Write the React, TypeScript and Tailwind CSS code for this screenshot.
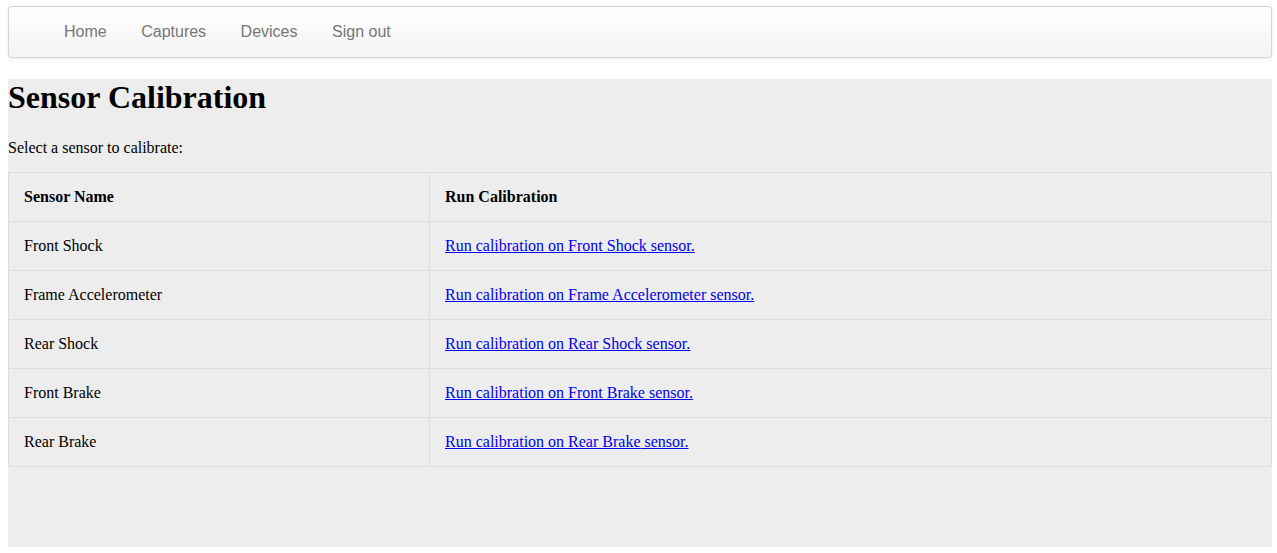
import React from "react";

const sensors = ["Front Shock", "Frame Accelerometer", "Rear Shock", "Front Brake", "Rear Brake"];

export default function App() {
  return (
    <div className="bg-white min-h-[553px] pt-[6px] pl-[8px] pr-[5px]" style={{ fontFamily: '"Liberation Serif", "Times New Roman", serif' }}>
      <nav
        className="h-[52px] border border-[#d4d4d4] rounded-[3px] bg-gradient-to-b from-white to-[#f3f3f3] shadow-[0_1px_5px_rgba(0,0,0,0.075)] flex items-center pl-[55px] gap-[34.5px] text-[16px] text-[#777]"
        style={{ fontFamily: '"Liberation Sans", Arial, sans-serif' }}
      >
        <span>Home</span>
        <span>Captures</span>
        <span>Devices</span>
        <span>Sign out</span>
      </nav>
      <main className="mt-[21px] bg-[#ededed] h-[468px] text-black text-[16px]">
        <h1 className="text-[32px] font-bold leading-[37px] mb-[22px]">Sensor Calibration</h1>
        <p className="leading-[19px] mb-[15px]">Select a sensor to calibrate:</p>
        <table className="w-full border-collapse border border-[#dcdcdc]">
          <thead>
            <tr>
              <th className="w-1/3 text-left font-bold px-[15px] py-[15px] leading-[18px] border border-[#dcdcdc]">Sensor Name</th>
              <th className="text-left font-bold px-[15px] py-[15px] leading-[18px] border border-[#dcdcdc]">Run Calibration</th>
            </tr>
          </thead>
          <tbody>
            {sensors.map((s) => (
              <tr key={s}>
                <td className="px-[15px] py-[15px] leading-[18px] border border-[#dcdcdc]">{s}</td>
                <td className="px-[15px] py-[15px] leading-[18px] border border-[#dcdcdc]">
                  <a href="#" className="text-[#0000ee] underline">Run calibration on {s} sensor.</a>
                </td>
              </tr>
            ))}
          </tbody>
        </table>
      </main>
    </div>
  );
}
